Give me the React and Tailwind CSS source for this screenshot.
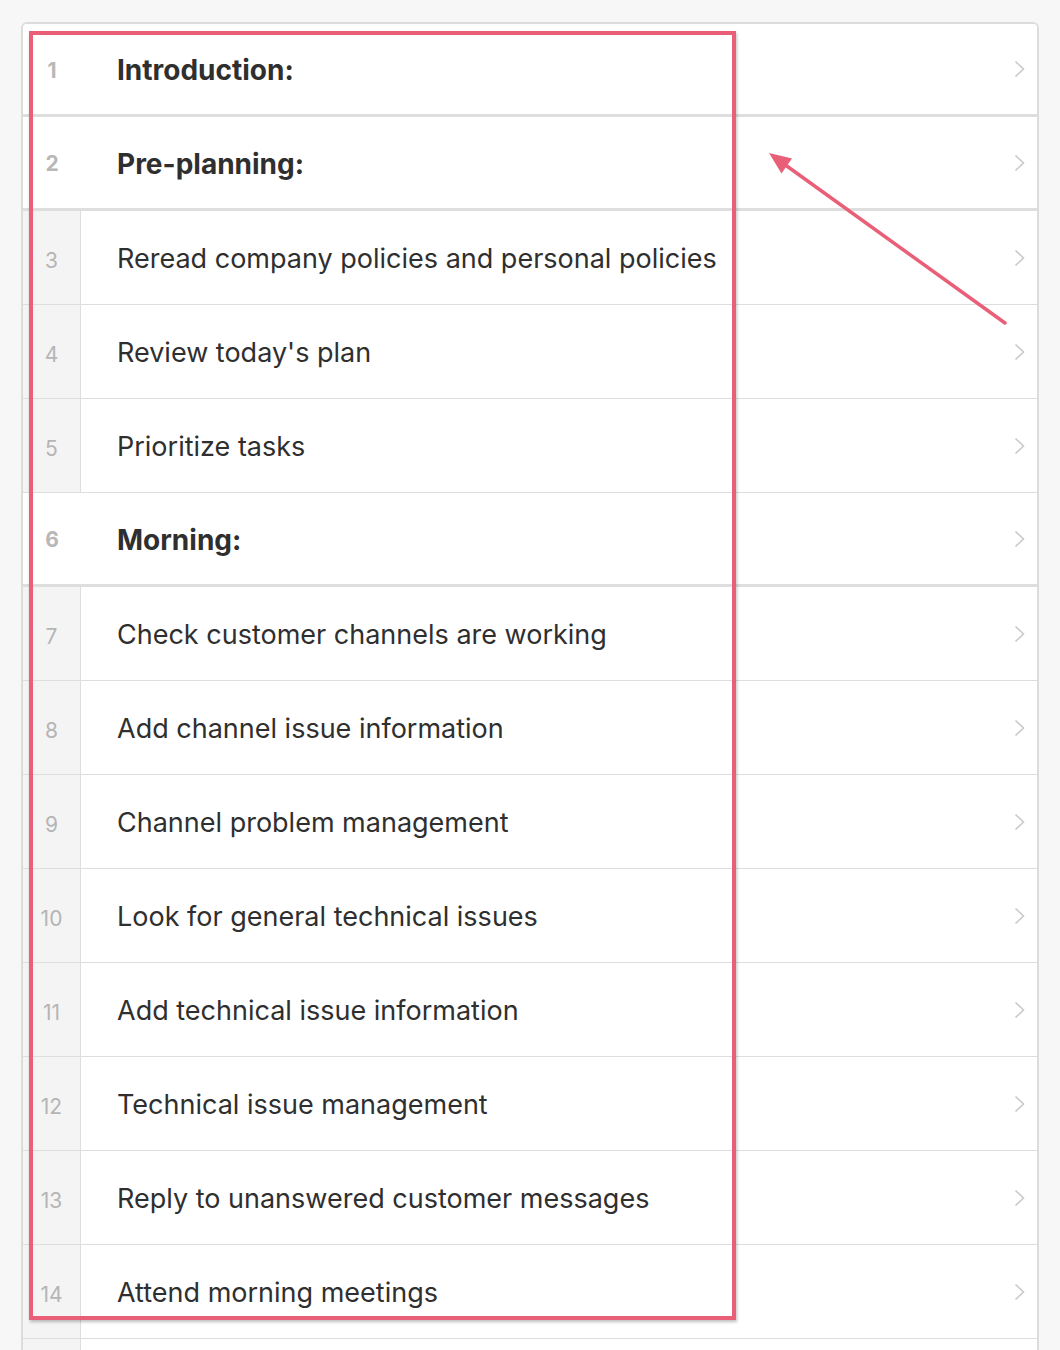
import React from "react";

const rows = [
  { n: 1, text: "Introduction:", section: true, h: "h-[93px]" },
  { n: 2, text: "Pre-planning:", section: true },
  { n: 3, text: "Reread company policies and personal policies" },
  { n: 4, text: "Review today's plan" },
  { n: 5, text: "Prioritize tasks" },
  { n: 6, text: "Morning:", section: true },
  { n: 7, text: "Check customer channels are working" },
  { n: 8, text: "Add channel issue information" },
  { n: 9, text: "Channel problem management" },
  { n: 10, text: "Look for general technical issues" },
  { n: 11, text: "Add technical issue information" },
  { n: 12, text: "Technical issue management" },
  { n: 13, text: "Reply to unanswered customer messages" },
  { n: 14, text: "Attend morning meetings" },
  { n: 15, text: "", hideNum: true },
];

function Chevron() {
  return (
    <svg width="12" height="18" viewBox="0 0 12 18" className="shrink-0">
      <path d="M2.5 1.5 L10.5 9 L2.5 16.5" fill="none" stroke="#c9c9c9" strokeWidth="1.6" />
    </svg>
  );
}

function Row({ row }) {
  if (row.section) {
    return (
      <div className={`flex items-center ${row.h || "h-[94px]"} border-b-[3px] border-[#dedede] bg-white`}>
        <div className="w-[58px] shrink-0 pt-[3px] text-center text-[21px] font-bold text-[#b8b8b8]">
          {row.n}
        </div>
        <div className="flex-1 pl-[36px] pt-[2px] text-[28px] font-bold text-[#2f2f2f]">{row.text}</div>
        <div className="pr-[12px]">
          <Chevron />
        </div>
      </div>
    );
  }
  return (
    <div className="flex h-[94px] border-b border-[#dedede] bg-white">
      <div className="flex w-[58px] shrink-0 items-center justify-center border-r border-[#dedede] bg-[#f4f4f4] pt-[7px] text-[21px] text-[#b5b5b5]">
        {row.hideNum ? "" : row.n}
      </div>
      <div className="flex flex-1 items-center pl-[36px] pt-[3px] text-[27px] text-[#2f2f2f]">{row.text}</div>
      <div className="flex items-center pr-[12px]">
        <Chevron />
      </div>
    </div>
  );
}

export default function App() {
  return (
    <div
      className="relative h-[1350px] overflow-hidden bg-[#f7f7f7] px-[21px] pt-[22px]"
      style={{ fontFamily: "Inter, 'Noto Sans', sans-serif" }}
    >
      {/* list card */}
      <div className="overflow-hidden rounded-t-[6px] border-2 border-[#dcdcdc] bg-white">
        {rows.map((r) => (
          <Row key={r.n} row={r} />
        ))}
      </div>

      {/* annotation box */}
      <div className="absolute left-[29px] top-[31px] h-[1289px] w-[707px] border-4 border-[#ea5f78] shadow-[1px_2px_3px_rgba(0,0,0,0.25)]" />

      {/* annotation arrow */}
      <svg className="absolute left-0 top-0" width="1060" height="1350">
        <line x1="1005" y1="323" x2="784" y2="164" stroke="#ea5f78" strokeWidth="3.5" strokeLinecap="round" />
        <polygon points="769,153 792,158.5 781.5,173.5" fill="#ea5f78" />
      </svg>
    </div>
  );
}
